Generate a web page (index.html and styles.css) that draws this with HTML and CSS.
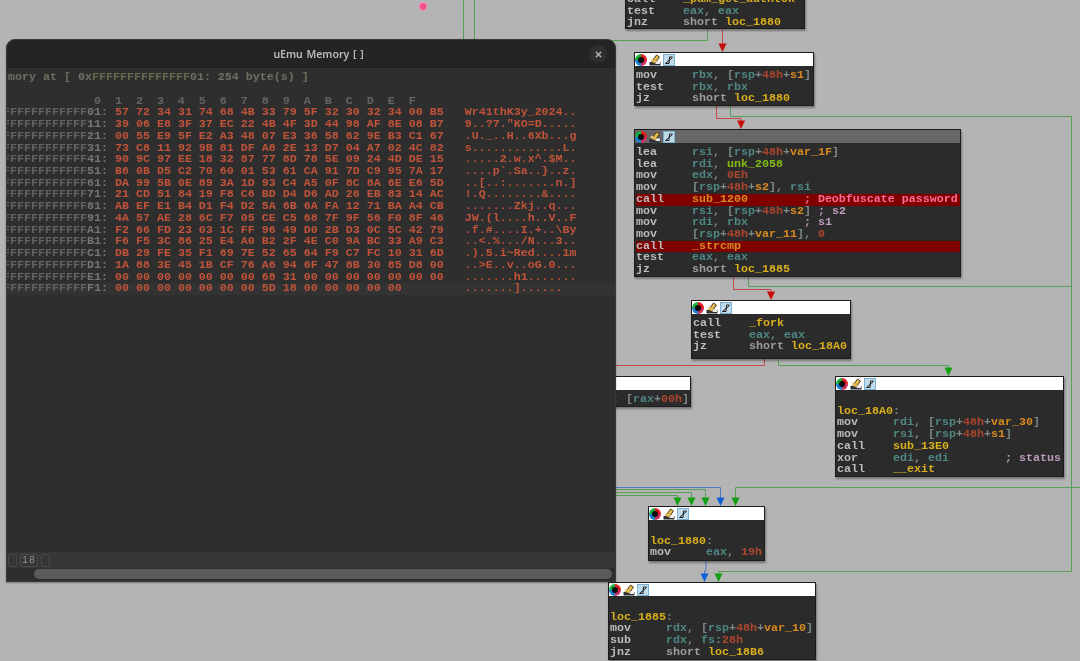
FILE: index.html
```html
<!DOCTYPE html>
<html lang="en">
<head>
<meta charset="utf-8">
<title>uEmu Memory</title>
<link rel="stylesheet" href="styles.css">
</head>
<body>
<svg class="defs" width="0" height="0" aria-hidden="true">
  <symbol id="ic-wheel" viewBox="0 0 12 12">
    <path d="M6 0A6 6 0 0 1 12 6H6z" fill="#e02020"/>
    <path d="M12 6A6 6 0 0 1 6 12V6z" fill="#d03060"/>
    <path d="M6 12A6 6 0 0 1 0 6H6z" fill="#1a80d0"/>
    <path d="M0 6A6 6 0 0 1 6 0V6z" fill="#18b040"/>
    <circle cx="6" cy="6" r="3" fill="#0c0c0c"/>
  </symbol>
  <symbol id="ic-pencil" viewBox="0 0 12 12">
    <path d="M0.500 8h11v3.500h-11z" fill="#28303c"/>
    <path d="M2 8.500 L7.500 1 L10.500 3 L6 9.500z" fill="#e4b84c" stroke="#3a3018" stroke-width="0.9"/>
    <path d="M6.500 7.500h4.500v2.500H6.500z" fill="#f0ece0"/>
    <path d="M1.500 5.500l2 -1 1 1.500-2 2z" fill="#f2d890"/>
  </symbol>
  <symbol id="ic-graph" viewBox="0 0 12 12">
    <rect x="0" y="0" width="12" height="12" fill="#c0dcec"/>
    <rect x="0.500" y="0.500" width="11" height="11" fill="none" stroke="#78b0d0"/>
    <path d="M2.500 9.500h3.500l0.500-6.500h3M2.500 9.500l7-6" fill="none" stroke="#1c1c1c" stroke-width="1"/>
  </symbol>
</svg>

<main class="desktop">
  <svg class="edges" width="1080" height="661" viewBox="0 0 1080 661" aria-hidden="true">
    <g class="e-green">
      <path d="M463.500 0V40"/>
      <path d="M474.500 0V40"/>
      <path d="M610 40.500H707.500V29"/>
      <path d="M730.500 105V116.500H1071.500"/>
      <path d="M748.500 276V286.500H1071.500"/>
      <path d="M1071.500 116V571.500H718.500V576"/>
      <path d="M1080 487.500H735.500V500"/>
      <path d="M778.500 358V365.500H948.500V370"/>
      <path d="M610 489.500H705.500V500"/>
      <path d="M610 492.500H691.500V500"/>
      <path d="M610 495.500H677.500V500"/>
    </g>
    <g class="e-red">
      <path d="M722.500 29V46"/>
      <path d="M716.500 105V118.500H741V123"/>
      <path d="M733.500 276V289.500H771V294"/>
      <path d="M764.500 358V365.500H610"/>
    </g>
    <g class="e-blue">
      <path d="M610 487.500H720.500V500"/>
      <path d="M706 560V571H704.500V576"/>
    </g>
    <g class="a-red">
      <path d="M718.500 43.500h8l-4 8.500z"/>
      <path d="M737 120.500h8l-4 8.500z"/>
      <path d="M767 291.500h8l-4 8.500z"/>
    </g>
    <g class="a-green">
      <path d="M944.500 367.500h8l-4 8.500z"/>
      <path d="M673.500 497.500h8l-4 8.500z"/>
      <path d="M687.500 497.500h8l-4 8.500z"/>
      <path d="M701.500 497.500h8l-4 8.500z"/>
      <path d="M731.500 497.500h8l-4 8.500z"/>
      <path d="M714.500 573.500h8l-4 8.500z"/>
    </g>
    <g class="a-blue">
      <path d="M716.500 497.500h8l-4 8.500z"/>
      <path d="M700.500 573.500h8l-4 8.500z"/>
    </g>
    <circle class="pin" cx="423" cy="6.500" r="4"/>
  </svg>

  <section class="node n-top">
    <pre class="code"><span class="m">call    </span><span class="l">_pam_get_authtok</span>
<span class="m">test    </span><span class="r">eax</span><span class="p">, </span><span class="r">eax</span>
<span class="m">jnz     </span><span class="s">short </span><span class="l">loc_1880</span></pre>
  </section>

  <section class="node n-b">
    <div class="head"><svg class="ic"><use href="#ic-wheel"/></svg><svg class="ic"><use href="#ic-pencil"/></svg><svg class="ic"><use href="#ic-graph"/></svg></div>
    <pre class="code"><span class="m">mov     </span><span class="r">rbx</span><span class="p">, [</span><span class="r">rsp</span><span class="p">+</span><span class="n">48h</span><span class="p">+</span><span class="v">s1</span><span class="p">]</span>
<span class="m">test    </span><span class="r">rbx</span><span class="p">, </span><span class="r">rbx</span>
<span class="m">jz      </span><span class="s">short </span><span class="l">loc_1880</span></pre>
  </section>

  <section class="node n-c">
    <div class="head head-sel"><svg class="ic"><use href="#ic-wheel"/></svg><svg class="ic"><use href="#ic-pencil"/></svg><svg class="ic"><use href="#ic-graph"/></svg></div>
    <pre class="code"><span class="m">lea     </span><span class="r">rsi</span><span class="p">, [</span><span class="r">rsp</span><span class="p">+</span><span class="n">48h</span><span class="p">+</span><span class="v">var_1F</span><span class="p">]</span>
<span class="m">lea     </span><span class="r">rdi</span><span class="p">, </span><span class="g">unk_2058</span>
<span class="m">mov     </span><span class="r">edx</span><span class="p">, </span><span class="n">0Eh</span>
<span class="m">mov     </span><span class="p">[</span><span class="r">rsp</span><span class="p">+</span><span class="n">48h</span><span class="p">+</span><span class="v">s2</span><span class="p">], </span><span class="r">rsi</span>
<span class="hit"><span class="m">call    </span><span class="v">sub_1200        </span><span class="c-hit">; Deobfuscate password</span></span><span class="m">mov     </span><span class="r">rsi</span><span class="p">, [</span><span class="r">rsp</span><span class="p">+</span><span class="n">48h</span><span class="p">+</span><span class="v">s2</span><span class="p">] </span><span class="c">; s2</span>
<span class="m">mov     </span><span class="r">rdi</span><span class="p">, </span><span class="r">rbx        </span><span class="c">; s1</span>
<span class="m">mov     </span><span class="p">[</span><span class="r">rsp</span><span class="p">+</span><span class="n">48h</span><span class="p">+</span><span class="v">var_11</span><span class="p">], </span><span class="n">0</span>
<span class="hit"><span class="m">call    </span><span class="v">_strcmp</span></span><span class="m">test    </span><span class="r">eax</span><span class="p">, </span><span class="r">eax</span>
<span class="m">jz      </span><span class="s">short </span><span class="l">loc_1885</span></pre>
  </section>

  <section class="node n-d">
    <div class="head"><svg class="ic"><use href="#ic-wheel"/></svg><svg class="ic"><use href="#ic-pencil"/></svg><svg class="ic"><use href="#ic-graph"/></svg></div>
    <pre class="code"><span class="m">call    </span><span class="l">_fork</span>
<span class="m">test    </span><span class="r">eax</span><span class="p">, </span><span class="r">eax</span>
<span class="m">jz      </span><span class="s">short </span><span class="l">loc_18A0</span></pre>
  </section>

  <section class="node n-e">
    <div class="head"></div>
    <pre class="code"><span class="m">nop     </span><span class="p">cs: [</span><span class="r">rax</span><span class="p">+</span><span class="n">00h</span><span class="p">]</span></pre>
  </section>

  <section class="node n-f">
    <div class="head"><svg class="ic"><use href="#ic-wheel"/></svg><svg class="ic"><use href="#ic-pencil"/></svg><svg class="ic"><use href="#ic-graph"/></svg></div>
    <pre class="code code-lbl"><span class="l">loc_18A0</span><span class="p">:</span>
<span class="m">mov     </span><span class="r">rdi</span><span class="p">, [</span><span class="r">rsp</span><span class="p">+</span><span class="n">48h</span><span class="p">+</span><span class="v">var_30</span><span class="p">]</span>
<span class="m">mov     </span><span class="r">rsi</span><span class="p">, [</span><span class="r">rsp</span><span class="p">+</span><span class="n">48h</span><span class="p">+</span><span class="v">s1</span><span class="p">]</span>
<span class="m">call    </span><span class="l">sub_13E0</span>
<span class="m">xor     </span><span class="r">edi</span><span class="p">, </span><span class="r">edi        </span><span class="c">; status</span>
<span class="m">call    </span><span class="l">__exit</span></pre>
  </section>

  <section class="node n-g">
    <div class="head"><svg class="ic"><use href="#ic-wheel"/></svg><svg class="ic"><use href="#ic-pencil"/></svg><svg class="ic"><use href="#ic-graph"/></svg></div>
    <pre class="code code-lbl"><span class="l">loc_1880</span><span class="p">:</span>
<span class="m">mov     </span><span class="r">eax</span><span class="p">, </span><span class="n">19h</span></pre>
  </section>

  <section class="node n-h">
    <div class="head"><svg class="ic"><use href="#ic-wheel"/></svg><svg class="ic"><use href="#ic-pencil"/></svg><svg class="ic"><use href="#ic-graph"/></svg></div>
    <pre class="code code-lbl"><span class="l">loc_1885</span><span class="p">:</span>
<span class="m">mov     </span><span class="r">rdx</span><span class="p">, [</span><span class="r">rsp</span><span class="p">+</span><span class="n">48h</span><span class="p">+</span><span class="v">var_10</span><span class="p">]</span>
<span class="m">sub     </span><span class="r">rdx</span><span class="p">, </span><span class="r">fs</span><span class="p">:</span><span class="n">28h</span>
<span class="m">jnz     </span><span class="s">short </span><span class="l">loc_18B6</span></pre>
  </section>

  <section class="window">
    <header class="titlebar">
      <h1 class="title">uEmu Memory [ ]</h1>
      <button class="close" type="button" aria-label="Close"><svg width="7" height="7" viewBox="0 0 8 8"><path d="M1 1l6 6M7 1l-6 6"/></svg></button>
    </header>
    <div class="dump">
<pre class="memline">Memory at [ <span class="ox">0x</span><span class="ff">FFFFFFFFFFFFFF</span>01: 254 byte(s) ]</pre>
<pre class="line"> </pre>
<pre class="line ruler">               0  1  2  3  4  5  6  7  8  9  A  B  C  D  E  F</pre>
<pre class="line"><span class="ad">FFFFFFFFFFFFFF</span><span class="ae">01:</span> 57 72 34 31 74 68 4B 33 79 5F 32 30 32 34 00 B5   Wr41thK3y_2024..</pre>
<pre class="line"><span class="ad">FFFFFFFFFFFFFF</span><span class="ae">11:</span> 39 06 E8 3F 37 EC 22 4B 4F 3D 44 98 AF 8E 08 B7   9..?7."KO=D.....</pre>
<pre class="line"><span class="ad">FFFFFFFFFFFFFF</span><span class="ae">21:</span> 00 55 E9 5F E2 A3 48 07 E3 36 58 62 9E B3 C1 67   .U._..H..6Xb...g</pre>
<pre class="line"><span class="ad">FFFFFFFFFFFFFF</span><span class="ae">31:</span> 73 C8 11 92 9B 81 DF A8 2E 13 D7 04 A7 02 4C 82   s.............L.</pre>
<pre class="line"><span class="ad">FFFFFFFFFFFFFF</span><span class="ae">41:</span> 90 9C 97 EE 18 32 87 77 8D 78 5E 09 24 4D DE 15   .....2.w.x^.$M..</pre>
<pre class="line"><span class="ad">FFFFFFFFFFFFFF</span><span class="ae">51:</span> B6 0B D5 C2 70 60 01 53 61 CA 91 7D C9 95 7A 17   ....p`.Sa..}..z.</pre>
<pre class="line"><span class="ad">FFFFFFFFFFFFFF</span><span class="ae">61:</span> DA 99 5B 0E 89 3A 1D 93 C4 A5 0F 8C 8A 6E E6 5D   ..[..:.......n.]</pre>
<pre class="line"><span class="ad">FFFFFFFFFFFFFF</span><span class="ae">71:</span> 21 CD 51 84 19 F8 C6 BD D4 D6 AD 26 EB 83 14 AC   !.Q........&amp;....</pre>
<pre class="line"><span class="ad">FFFFFFFFFFFFFF</span><span class="ae">81:</span> AB EF E1 B4 D1 F4 D2 5A 6B 6A FA 12 71 BA A4 CB   .......Zkj..q...</pre>
<pre class="line"><span class="ad">FFFFFFFFFFFFFF</span><span class="ae">91:</span> 4A 57 AE 28 6C F7 05 CE C5 68 7F 9F 56 F0 8F 46   JW.(l....h..V..F</pre>
<pre class="line"><span class="ad">FFFFFFFFFFFFFF</span><span class="ae">A1:</span> F2 66 FD 23 03 1C FF 96 49 D0 2B D3 0C 5C 42 79   .f.#....I.+..\By</pre>
<pre class="line"><span class="ad">FFFFFFFFFFFFFF</span><span class="ae">B1:</span> F6 F5 3C 86 25 E4 A0 B2 2F 4E C0 9A BC 33 A9 C3   ..&lt;.%.../N...3..</pre>
<pre class="line"><span class="ad">FFFFFFFFFFFFFF</span><span class="ae">C1:</span> DB 29 FE 35 F1 69 7E 52 65 64 F9 C7 FC 10 31 6D   .).5.i~Red....1m</pre>
<pre class="line"><span class="ad">FFFFFFFFFFFFFF</span><span class="ae">D1:</span> 1A 88 3E 45 1B CF 76 A6 94 6F 47 8B 30 85 D8 00   ..&gt;E..v..oG.0...</pre>
<pre class="line"><span class="ad">FFFFFFFFFFFFFF</span><span class="ae">E1:</span> 00 00 00 00 00 00 00 68 31 00 00 00 00 00 00 00   .......h1.......</pre>
<pre class="line line-cur"><span class="ad">FFFFFFFFFFFFFF</span><span class="ae">F1:</span> 00 00 00 00 00 00 00 5D 18 00 00 00 00 00         .......]......</pre>
    </div>
    <div class="tabs">
      <span class="tab tab-empty"></span>
      <span class="tab">18</span>
      <span class="tab tab-empty"></span>
    </div>
    <div class="scroll"><div class="thumb"></div></div>
  </section>
</main>
</body>
</html>
```
FILE: styles.css
```css
* { box-sizing: border-box; }
html, body { margin: 0; padding: 0; background: #b4b4b4; }
.defs { position: absolute; }
.desktop {
  position: relative;
  width: 1080px;
  height: 661px;
  overflow: hidden;
  background: #b4b4b4;
  font-family: "Liberation Mono", monospace;
  filter: blur(0.45px);
}
pre { margin: 0; font: inherit; }

.edges { position: absolute; left: 0; top: 0; }
.edges path { fill: none; stroke-width: 1; }
.e-green path { stroke: #58a058; }
.e-red path { stroke: #c24a4a; }
.e-blue path { stroke: #5078c8; }
.edges .a-red path { fill: #c80c0c; stroke: none; }
.edges .a-green path { fill: #12a012; stroke: none; }
.edges .a-blue path { fill: #1060d8; stroke: none; }
.pin { fill: #f0508c; stroke: #f0a0c0; stroke-width: 1; }

.node {
  position: absolute;
  background: #2b2b2b;
  border: 1px solid #1c1c1c;
  box-shadow: 1px 2px 2px rgba(0, 0, 0, 0.35);
  font-size: 11.67px;
  font-weight: 700;
}
.head {
  display: flex;
  align-items: center;
  gap: 2px;
  height: 13px;
  background: #fff;
}
.head-sel { background: #676767; }
.ic { width: 12px; height: 12px; flex: none; }
.code {
  padding: 4px 0 2px 1px;
  line-height: 11.72px;
  color: #c0c0c0;
  white-space: pre;
}
.code-lbl { padding-top: 15.7px; }
.n-top { left: 625px; top: -12px; width: 180px; height: 41px; }
.n-top .code { padding-top: 5px; }
.n-b { left: 634px; top: 52px; width: 180px; height: 54px; }
.n-c { left: 634px; top: 129px; width: 327px; height: 148px; }
.n-d { left: 691px; top: 300px; width: 160px; height: 59px; }
.n-e { left: 540px; top: 376px; width: 151px; height: 31px; }
.n-f { left: 835px; top: 376px; width: 229px; height: 101px; }
.n-g { left: 648px; top: 506px; width: 117px; height: 55px; }
.n-h { left: 608px; top: 582px; width: 208px; height: 78px; }

.m { color: #bcbcbc; }
.s { color: #9c9c9c; }
.r { color: #4f8783; }
.p { color: #7c8a88; }
.n { color: #ad452e; }
.v { color: #d98a1e; }
.l { color: #d8ae1c; }
.g { color: #84bc14; }
.c { color: #bc9cbc; }
.c-hit { color: #ff6a94; }
.hit { display: block; height: 11.72px; background: #800000; }

.window {
  position: absolute;
  left: 6px;
  top: 39px;
  width: 610px;
  height: 543px;
  display: flex;
  flex-direction: column;
  overflow: hidden;
  background: #2e2e2e;
  border: 1px solid #3a3a3a;
  border-radius: 9px 9px 0 0;
  box-shadow: 0 1px 2px rgba(0, 0, 0, 0.35);
}
.titlebar {
  flex: none;
  position: relative;
  display: flex;
  align-items: center;
  justify-content: center;
  height: 28px;
  padding-left: 15px;
  background: #242424;
  border-bottom: 1px solid #1f1f1f;
}
.title {
  margin: 0;
  font: 600 10.5px "Noto Sans", sans-serif;
  word-spacing: 1px;
  color: #bcbcbc;
}
.close {
  position: absolute;
  right: 8px;
  top: 5px;
  width: 18px;
  height: 18px;
  padding: 0;
  display: flex;
  align-items: center;
  justify-content: center;
  background: #2f2f2f;
  border: 0;
  border-radius: 50%;
}
.close path { stroke: #a8a8a8; stroke-width: 1.8; fill: none; }

.dump {
  flex: 1;
  min-height: 0;
  margin-left: -18px;
  padding-top: 4.3px;
  font-size: 11.67px;
  font-weight: 700;
  line-height: 11.73px;
  color: #c0533a;
}
.line, .memline { height: 11.73px; white-space: pre; }
.memline { margin-left: 5px; color: #6f6f63; }
.ox { color: #727268; }
.ff { color: #68684c; }
.ruler { color: #646464; }
.ad { color: #626262; }
.ae { color: #767676; }
.line-cur { background: #333; }

.tabs {
  flex: none;
  display: flex;
  align-items: center;
  gap: 3px;
  height: 16px;
  background: #363636;
  font: 400 10px "Liberation Mono", monospace;
  color: #929292;
}
.tab {
  height: 13px;
  padding: 0 1px;
  line-height: 12px;
  border: 1px solid #4a4a4a;
  border-radius: 2px;
  letter-spacing: 1px;
}
.tab-empty { width: 9px; }
.tab:first-child { margin-left: 1px; }
.scroll {
  flex: none;
  height: 13px;
  padding: 1px 3px 2px 27px;
  background: #2e2e2e;
}
.thumb { height: 10px; background: #5a5a5a; border-radius: 5px; }
```
